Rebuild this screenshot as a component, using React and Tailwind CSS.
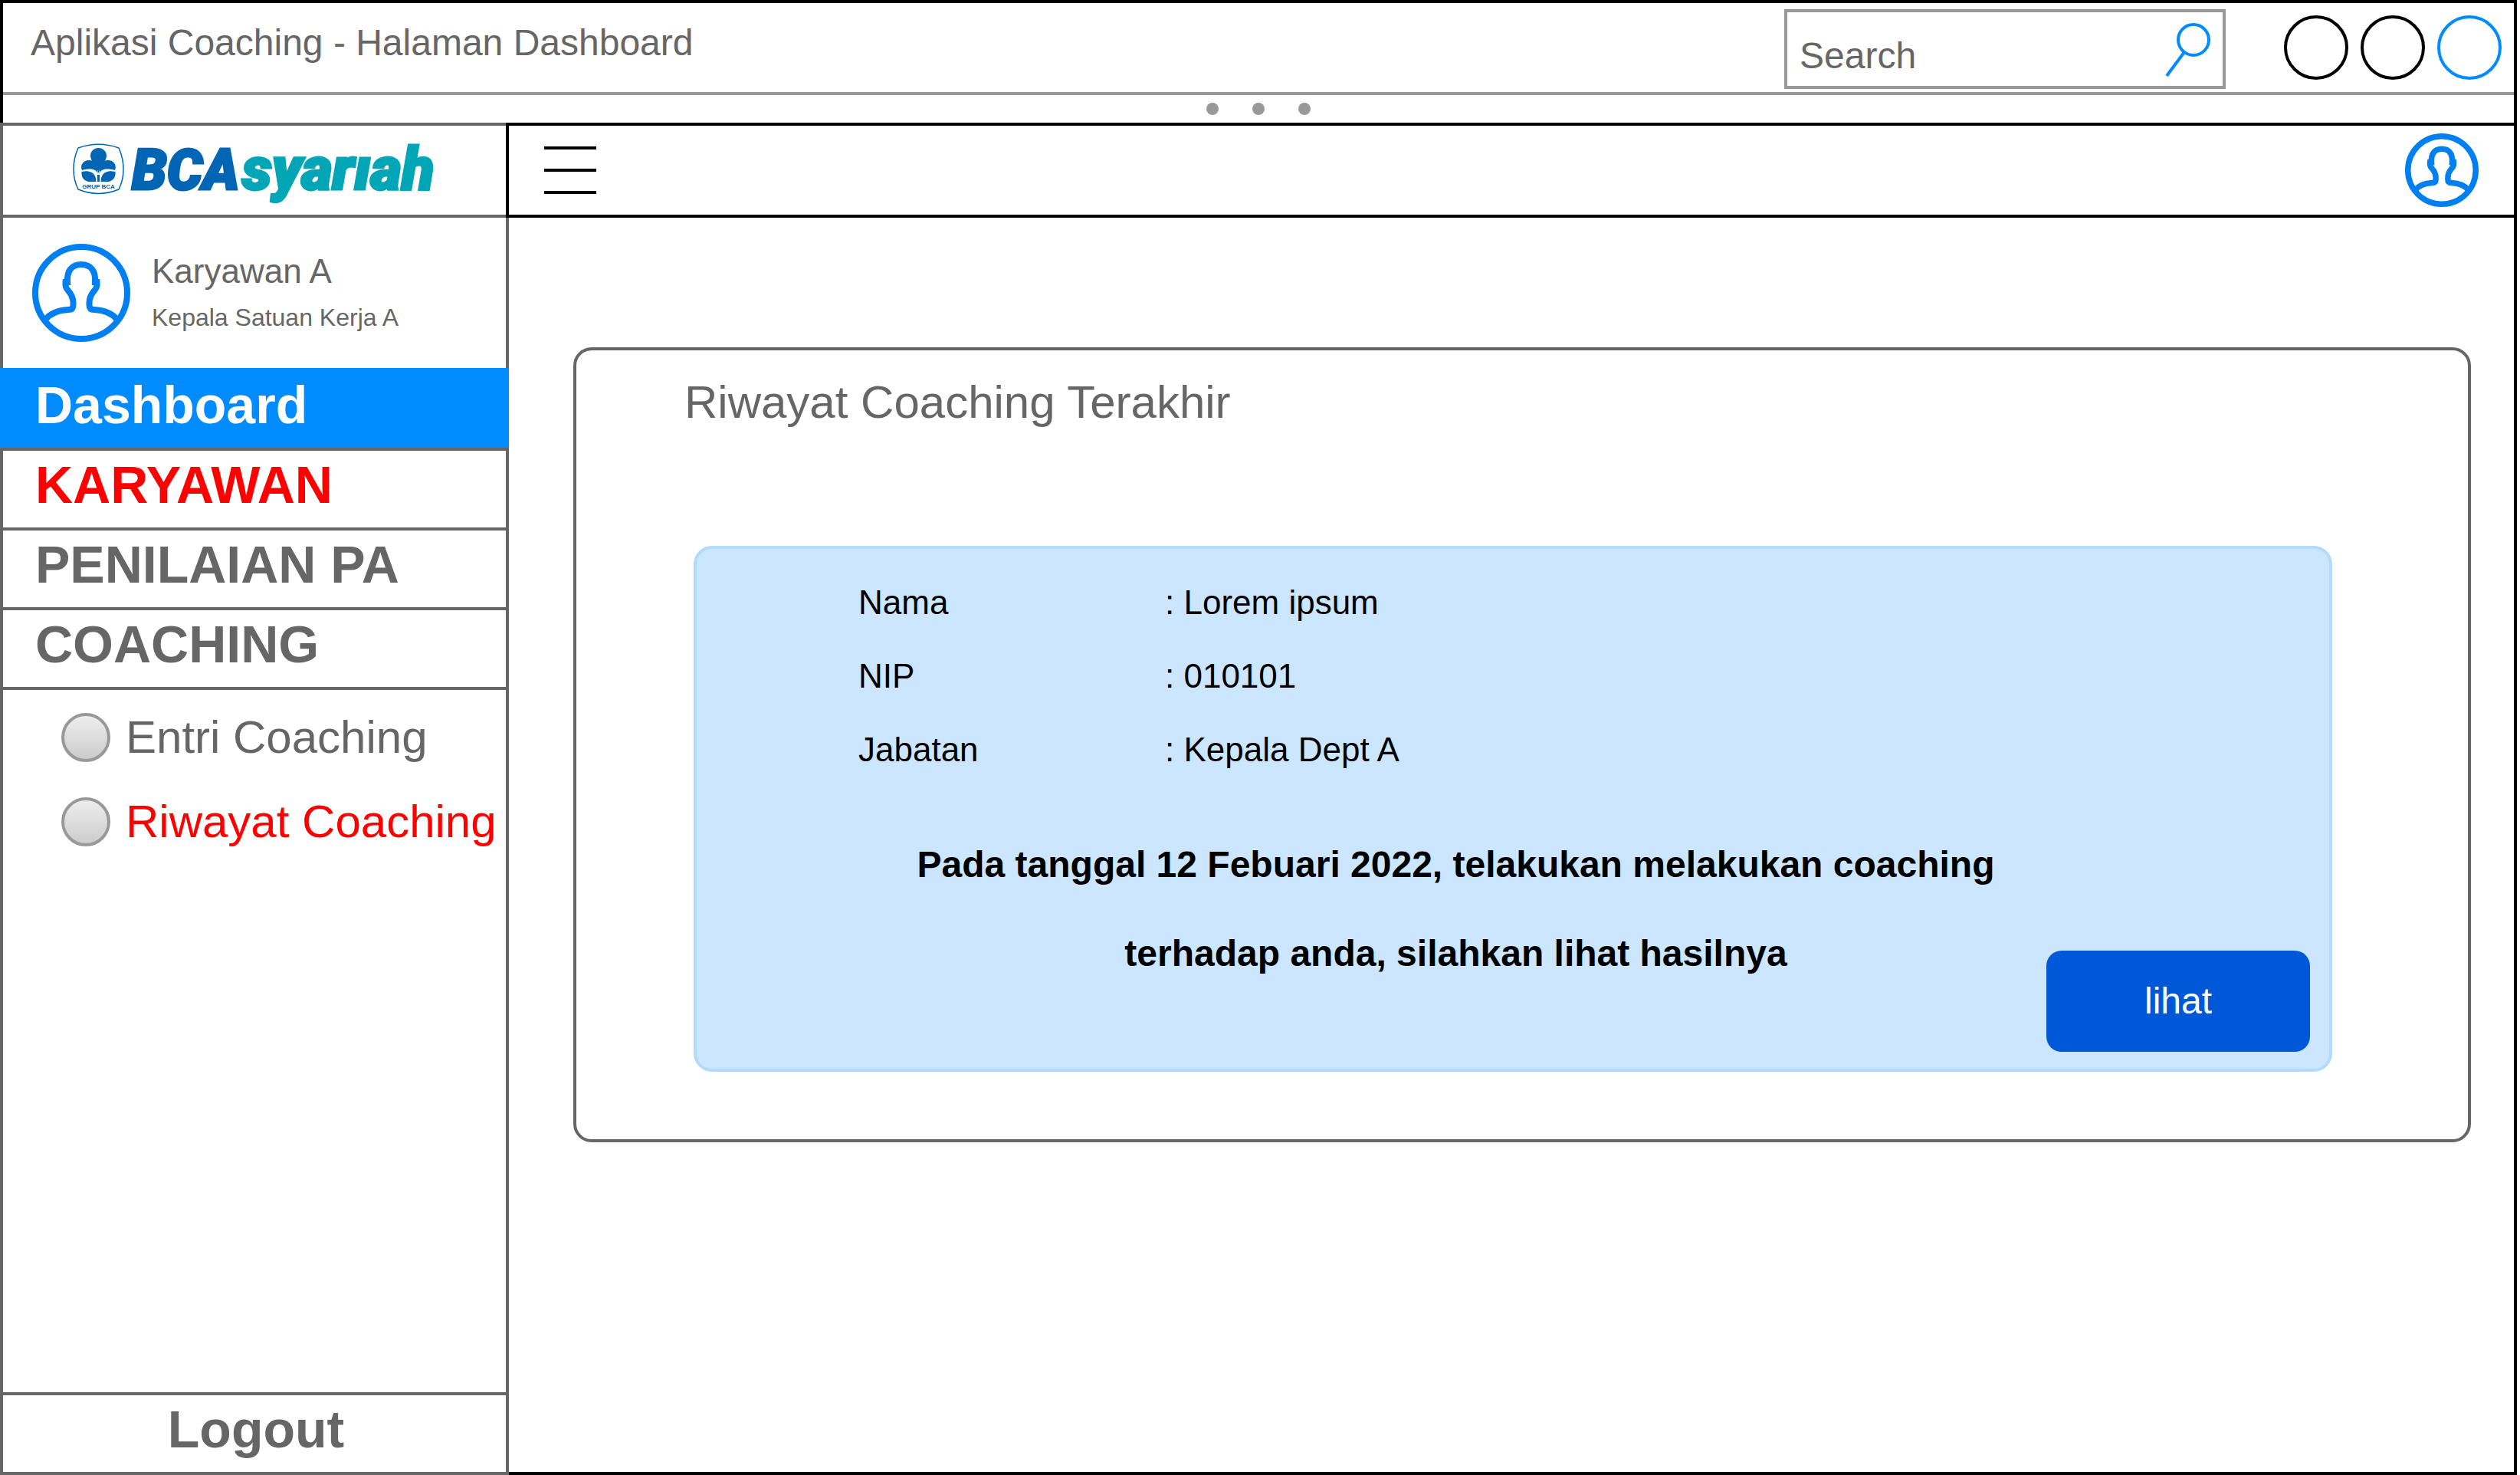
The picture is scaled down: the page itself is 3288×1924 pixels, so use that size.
const MENU = [
  { label: "Dashboard", tone: "h-[104px] bg-[#008cff] pt-[10px] pl-[46px] text-white" },
  { label: "KARYAWAN", tone: "mx-1 h-[100px] pt-[6px] pl-[42px] text-[#ff0000]" },
  { label: "PENILAIAN PA", tone: "mx-1 h-[100px] pt-[6px] pl-[42px] text-[#666666]" },
  { label: "COACHING", tone: "mx-1 h-[100px] pt-[6px] pl-[42px] text-[#666666]" },
];

const SUBMENU = [
  { label: "Entri Coaching", tone: "text-[#666666]" },
  { label: "Riwayat Coaching", tone: "text-[#ff0000]" },
];

const DETAILS = [
  ["Nama", "Lorem ipsum"],
  ["NIP", "010101"],
  ["Jabatan", "Kepala Dept A"],
];

function Avatar({ className, stroke }) {
  return (
    <svg viewBox="0 0 128 128" fill="none" stroke="#0080f0" strokeWidth={stroke} className={className} aria-hidden="true">
      <circle cx="64" cy="64" r={64 - stroke / 2} />
      <path d="M17 99 C25 89 37 86.500 47 86 Q53.500 86 53.500 80 V77 C53.500 70 50.500 65 46.500 60.500 C43.500 57.500 43 55 43.500 50 L46 50 C45 36 51 27 64 27 C77 27 83 36 82 50 L84.500 50 C85 55 84.500 57.500 81.500 60.500 C77.500 65 74.500 70 74.500 77 V80 Q74.500 86 81 86 C91 86.500 103 89 111 99" />
    </svg>
  );
}

function Logo() {
  return (
    <svg viewBox="0 0 480 96" className="h-24 w-[480px] overflow-visible" role="img" aria-label="BCA Syariah">
      <path
        d="M12 9 C29 3 48 3 65 9 C73 27 73 47 65 63 C48 70 29 70 12 63 C4 47 4 27 12 9 Z"
        fill="none"
        stroke="#0066b3"
        strokeWidth="1.500"
      />
      <g fill="#0066b3">
        <path d="M38.500 9 C44.500 9 49 13.500 49 19 C49 27 41 31 38.500 42 C36 31 28 27 28 19 C28 13.500 32.500 9 38.500 9 Z" />
        <path d="M37.500 43 C36 37 30 35 17 38 C14 31 19 25 26 25 C34 25 37 33 37.500 43 Z" />
        <path d="M39.500 43 C41 37 47 35 60 38 C63 31 58 25 51 25 C43 25 40 33 39.500 43 Z" />
        <path d="M16.500 40 C28 37 35.500 42 35.500 53 H25 C18 51 16 46 16.500 40 Z" />
        <path d="M60.500 40 C49 37 41.500 42 41.500 53 H52 C59 51 61 46 60.500 40 Z" />
        <path d="M37 44 H40 V53 H37 Z" />
      </g>
      <text x="38.500" y="62" textAnchor="middle" fontSize="8" className="fill-[#0066b3] font-bold">
        GRUP BCA
      </text>
      <text x="82" y="63" fontSize="73" stroke="#0066b3" strokeWidth="3" className="fill-[#0066b3] font-['Roboto'] font-black italic">
        BCA
      </text>
      <text x="226" y="63" fontSize="78" stroke="#00a6b6" strokeWidth="3" className="fill-[#00a6b6] font-['Roboto'] font-black italic">
        syarıah
      </text>
    </svg>
  );
}

function TitleBar() {
  return (
    <header>
      <div className="flex h-[120px] items-start border-b-4 border-[#999999] pt-2 pr-4 pl-9">
        <h1 className="pt-4 text-[48px] leading-[56px] text-[#666666]">Aplikasi Coaching - Halaman Dashboard</h1>
        <label className="ml-auto flex h-[104px] w-[576px] items-center border-4 border-[#999999] px-4">
          <span className="sr-only">Search</span>
          <input
            type="text"
            placeholder="Search"
            className="mt-4 h-16 min-w-0 flex-1 bg-transparent text-[48px] leading-[56px] text-[#666666] outline-none placeholder:text-[#666666] placeholder:opacity-100"
          />
          <svg viewBox="0 0 60 72" className="h-[72px] w-[60px] shrink-0" fill="none" stroke="#008cff" strokeWidth="4" aria-hidden="true">
            <circle cx="38" cy="24" r="20" />
            <path d="M26 40 L3 71" />
          </svg>
        </label>
        <div className="mt-2 ml-[76px] flex gap-4">
          <button type="button" aria-label="Minimize" className="size-[84px] rounded-full border-4 border-black" />
          <button type="button" aria-label="Maximize" className="size-[84px] rounded-full border-4 border-black" />
          <button type="button" aria-label="Close" className="size-[84px] rounded-full border-4 border-[#008cff]" />
        </div>
      </div>
      <div className="flex h-9 items-center justify-center gap-11">
        <span className="size-4 rounded-full bg-[#999999]" />
        <span className="size-4 rounded-full bg-[#999999]" />
        <span className="size-4 rounded-full bg-[#999999]" />
      </div>
    </header>
  );
}

function Sidebar() {
  return (
    <aside className="-mb-1 -ml-1 flex w-[664px] shrink-0 flex-col border-b-4 border-[#666666] bg-[linear-gradient(#666666,#666666),linear-gradient(#666666,#666666)] bg-[length:4px_100%] bg-[position:left,right] bg-no-repeat">
      <div className="flex h-[124px] items-end border-y-4 border-[#666666] pl-[90px]">
        <Logo />
      </div>
      <div className="flex h-[196px] items-center gap-7 pl-[42px]">
        <Avatar className="size-32" stroke={8} />
        <div>
          <p className="text-[44px] leading-[64px] text-[#666666]">Karyawan A</p>
          <p className="text-[32px] leading-[56px] text-[#666666]">Kepala Satuan Kerja A</p>
        </div>
      </div>
      <nav className="flex flex-1 flex-col">
        <ul>
          {MENU.map((item) => (
            <li key={item.label} className="border-b-4 border-[#666666]">
              <a href="#" className={`flex items-start text-[68px] leading-[76px] font-bold ${item.tone}`}>
                {item.label}
              </a>
            </li>
          ))}
        </ul>
        <ul className="flex flex-col gap-[46px] pt-[30px] pl-20">
          {SUBMENU.map((item) => (
            <li key={item.label}>
              <label className={`flex h-16 items-center gap-5 text-[60px] leading-[64px] whitespace-nowrap ${item.tone}`}>
                <input
                  type="radio"
                  name="coaching"
                  className="size-16 shrink-0 appearance-none rounded-full border-4 border-[#999999] bg-linear-to-b from-[#eeeeee] to-[#cccccc]"
                />
                {item.label}
              </label>
            </li>
          ))}
        </ul>
        <a
          href="#"
          className="mt-auto flex h-[104px] items-start justify-center border-t-4 border-[#666666] pt-[6px] pl-1 text-[68px] leading-[76px] font-bold text-[#666666]"
        >
          Logout
        </a>
      </nav>
    </aside>
  );
}

function HistoryCard() {
  return (
    <section className="mt-[169px] mr-14 ml-[84px] rounded-[24px] border-4 border-[#666666] pr-[177px] pb-[88px] pl-[153px]">
      <h2 className="-ml-3 pt-8 text-[60px] leading-[72px] text-[#666666]">Riwayat Coaching Terakhir</h2>
      <div className="mt-[151px] rounded-[24px] border-4 border-[#b3d9ff] bg-[#cce6ff] pr-[25px] pb-[22px] text-black">
        <dl className="pt-[22px] pl-[211px]">
          {DETAILS.map(([name, value]) => (
            <div key={name} className="flex h-24 items-center text-[44px] leading-[52px]">
              <dt className="w-[400px]">{name}</dt>
              <dd>: {value}</dd>
            </div>
          ))}
        </dl>
        <div className="mt-11 mr-[124px] text-center text-[48px] leading-[116px] font-bold">
          <p>Pada tanggal 12 Febuari 2022, telakukan melakukan coaching</p>
          <p>terhadap anda, silahkan lihat hasilnya</p>
        </div>
        <div className="-mt-[62px] flex justify-end">
          <button type="button" className="h-[132px] w-[344px] rounded-[20px] bg-[#0057d8] text-[48px] leading-[56px] text-white">
            lihat
          </button>
        </div>
      </div>
    </section>
  );
}

export default function App() {
  return (
    <div className="min-h-screen bg-white pr-1 font-['Liberation_Sans',Arial,sans-serif]">
      <div className="flex min-h-screen flex-col border-4 border-black">
        <TitleBar />
        <div className="flex flex-1">
          <Sidebar />
          <main className="min-w-0 flex-1">
            <div className="-mr-1 -ml-1 flex h-[124px] items-center justify-between border-4 border-black px-[46px]">
              <button type="button" aria-label="Menu" className="flex w-[68px] flex-col gap-[25px]">
                <span className="h-1 bg-black" />
                <span className="h-1 bg-black" />
                <span className="h-1 bg-black" />
              </button>
              <button type="button" aria-label="Profile">
                <Avatar className="size-24" stroke={10} />
              </button>
            </div>
            <HistoryCard />
          </main>
        </div>
      </div>
    </div>
  );
}
